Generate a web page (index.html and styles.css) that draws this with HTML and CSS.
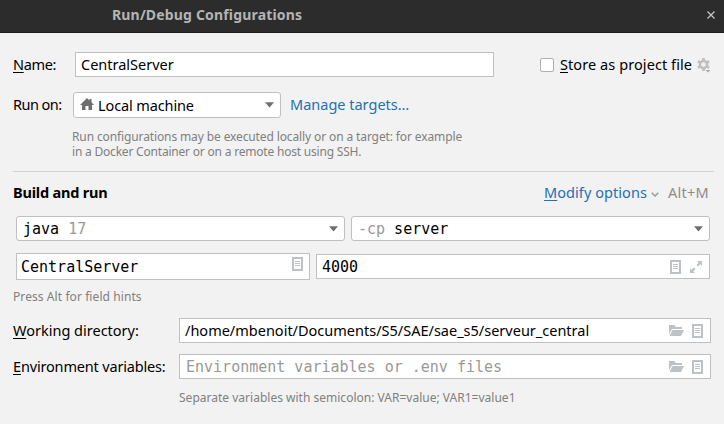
FILE: index.html
```html
<!DOCTYPE html>
<html lang="en">
<head>
<meta charset="utf-8">
<title>Run/Debug Configurations</title>
<link rel="stylesheet" href="styles.css">
</head>
<body>
<svg class="defs" width="0" height="0" aria-hidden="true">
  <symbol id="doc" viewBox="0 0 11 14"><path fill="#bcc2c6" fill-rule="evenodd" d="M0 0h11v14H0zM2 2v10h7V2z"/><path fill="#bcc2c6" d="M3 4h5v1H3zM3 6h5v1H3zM3 8h5v1H3z"/></symbol>
  <symbol id="folder" viewBox="0 0 15 12"><path fill="#bcc2c6" d="M0 9.500V0h5l2 2h6v2H3z"/><path fill="#bcc2c6" d="M3.500 5H15l-3 6H.5z"/></symbol>
  <symbol id="arrow" viewBox="0 0 9 6"><path fill="#6e6e6e" d="M0 .3h9L4.500 5.500z"/></symbol>
</svg>
<header class="titlebar">
  <h1 class="title">Run/Debug Configurations</h1>
  <svg class="close" width="8" height="8" viewBox="0 0 8 8"><path d="M.5.500l7 7M7.500.500l-7 7" stroke="#c4c4c4" stroke-width="1.300"/></svg>
</header>
<main class="form">
  <div class="row name-row">
    <label class="label t-name"><u>N</u>ame:</label>
    <div class="field name-field"><span>CentralServer</span></div>
    <span class="checkbox"></span>
    <span class="store"><u>S</u>tore as project file</span>
    <svg class="gear" width="14" height="15" viewBox="0 0 14 15"><g fill="none" stroke="#bfbfbf"><circle cx="6.500" cy="6.500" r="3.600" stroke-width="2.500"/><path stroke-width="2.800" d="M6.500 0v2.200M6.500 10.800V13M.9 3.250l1.900 1.100M10.200 8.650l1.900 1.100M.9 9.750l1.900-1.100M10.200 4.350l1.900-1.100"/></g><path fill="#f2f2f2" d="M8 11h6v4H8z"/><path fill="#aaa" d="M8.500 12h5L11 14.500z"/></svg>
  </div>
  <div class="row run-row">
    <span class="label t-runon">Run on:</span>
    <div class="field combo machine">
      <svg width="14" height="12" viewBox="0 0 14 12"><path fill="#6e6e6e" d="M7 0l2.500 2.400V1h2v3.300L14 7h-2v5H8.500V8h-3v4H2V7H0z"/></svg>
      <span>Local machine</span>
      <svg class="end" width="9" height="6"><use href="#arrow"/></svg>
    </div>
    <a class="link">Manage targets…</a>
  </div>
  <p class="hint run-hint"><span class="line-one">Run configurations may be executed locally or on a target: for example</span><span class="line-two">in a Docker Container or on a remote host using SSH.</span></p>
  <hr>
  <div class="row section">
    <h2>Build and run</h2>
    <a class="link modify"><u>M</u>odify options</a>
    <svg class="chevron" width="8" height="5" viewBox="0 0 8 5"><path fill="none" stroke="#9a9fa3" stroke-width="1.600" d="M.7.700L4 4 7.300.700"/></svg>
    <span class="shortcut">Alt+M</span>
  </div>
  <div class="row combos">
    <div class="field combo mono java"><span>java <i>17</i></span><svg class="end" width="9" height="6"><use href="#arrow"/></svg></div>
    <div class="field combo mono classpath"><span><i>-cp</i> server</span><svg class="end" width="9" height="6"><use href="#arrow"/></svg></div>
  </div>
  <div class="row inputs">
    <div class="field mono main-class"><span>CentralServer</span><svg class="end" width="11" height="14"><use href="#doc"/></svg></div>
    <div class="field mono args"><span>4000</span><svg class="end" width="11" height="14"><use href="#doc"/></svg>
      <svg class="expand" width="12" height="12" viewBox="0 0 12 12"><path fill="#bcc2c6" d="M7 0h5v5l-1.700-1.700L8 5.600 6.400 4l2.300-2.300zM0 12V7l1.700 1.700L4 6.400 5.600 8l-2.300 2.300L5 12z"/></svg></div>
  </div>
  <p class="hint press">Press Alt for field hints</p>
  <div class="row wd-row">
    <label class="label wide"><u>W</u>orking directory:</label>
    <div class="field path"><span>/home/mbenoit/Documents/S5/SAE/sae_s5/serveur_central</span><svg class="end" width="15" height="12"><use href="#folder"/></svg><svg class="doc" width="11" height="14"><use href="#doc"/></svg></div>
  </div>
  <div class="row env-row">
    <label class="label wide t-env"><u>E</u>nvironment variables:</label>
    <div class="field mono env"><i>Environment variables or .env files</i><svg class="end" width="15" height="12"><use href="#folder"/></svg><svg class="doc" width="11" height="14"><use href="#doc"/></svg></div>
  </div>
  <p class="hint sep">Separate variables with semicolon: VAR=value; VAR1=value1</p>
</main>
</body>
</html>
```
FILE: styles.css
```css
* { box-sizing: border-box; }
body { margin: 0; width: 724px; height: 424px; overflow: hidden; background: #f2f2f2; color: #000; font: 14.5px/20px "Noto Sans", sans-serif; white-space: nowrap; }
h1, h2, p { margin: 0; }
i { font-style: normal; color: #999; }
u { text-decoration-thickness: 1px; text-underline-offset: 2px; text-decoration-skip-ink: none; }
svg { flex: none; display: block; }
.defs { position: absolute; }
.titlebar { height: 33px; background: #2c2c2c; border-bottom: 1px solid #1b1b1b; display: flex; align-items: center; padding: 0 9px 3px 112px; }
.title { font-size: 14px; font-weight: 700; color: #b4b4b4; letter-spacing: .17px; }
.close { margin-left: auto; }
.form { padding: 19px 10px 0 13px; }
.row { display: flex; align-items: center; }
.label { width: 62px; flex: none; padding-bottom: 2px; }
.wide { width: 166px; }
.t-name { letter-spacing: -.35px; }
.t-runon { letter-spacing: -.55px; }
.t-env { letter-spacing: -.17px; }
.field { display: flex; align-items: center; flex: none; background: #fff; border: 1px solid #c0c0c0; padding: 0 7px 0 5px; }
.name-field span, .path span { padding-bottom: 2px; }
.combo { border-radius: 3px; }
.field .end { margin-left: auto; }
.mono { font: 15px/20px "DejaVu Sans Mono", monospace; }
.name-row { height: 25px; }
.name-field { width: 419px; height: 25px; }
.checkbox { width: 14px; height: 14px; flex: none; border: 1px solid #b0b0b0; border-radius: 2px; background: #fff; margin-left: 46px; }
.store { margin-left: 6px; width: 137px; flex: none; padding-bottom: 2px; letter-spacing: .08px; }
.gear { margin-top: 2px; }
.run-row { height: 26px; margin-top: 15px; }
.run-row .label { width: 60px; }
.machine { width: 208px; height: 26px; padding: 0 6px; }
.machine span { margin-left: 4px; letter-spacing: -.12px; }
.machine svg:first-child { margin-bottom: 2px; }
.link { color: #2470b3; }
.run-row .link { margin-left: 9px; padding-bottom: 2px; }
.hint { color: #808080; font-size: 12px; line-height: 15px; }
.hint span { display: block; }
.line-one { letter-spacing: -.12px; }
.line-two { letter-spacing: -.2px; }
.run-hint { margin: 11px 0 0 59px; }
hr { margin: 12px 0 0; border: 0; height: 1px; width: 701px; background: #d1d1d1; }
.section { height: 20px; margin-top: 10px; }
h2 { font-size: 14.5px; line-height: 20px; letter-spacing: -.2px; }
.modify { margin-left: auto; width: 104px; letter-spacing: .06px; }
.chevron { margin: 4px 9px 0 3px; }
.shortcut { color: #8c8c8c; width: 46px; letter-spacing: .25px; }
.combos { height: 25px; margin: 14px 0 0 3px; gap: 6px; }
.combos .field { height: 25px; padding-left: 6px; padding-right: 6px; }
.java { width: 329px; }
.classpath { width: 359px; }
.inputs { height: 27px; margin: 12px 0 0 3px; gap: 6px; }
.main-class { width: 294px; height: 27px; padding-left: 4px; padding-right: 6px; }
.main-class svg { margin-top: -5px; }
.args { width: 394px; height: 25px; }
.expand { margin-left: 9px; }
.press { margin-top: 9px; letter-spacing: .08px; }
.wd-row { height: 25px; margin-top: 14px; }
.path, .env { width: 532px; height: 25px; }
.env { padding-left: 6px; }
.doc { margin-left: 8px; }
.env-row { height: 25px; margin-top: 11px; }
.sep { margin: 11px 0 0 166px; letter-spacing: .01px; }
```
